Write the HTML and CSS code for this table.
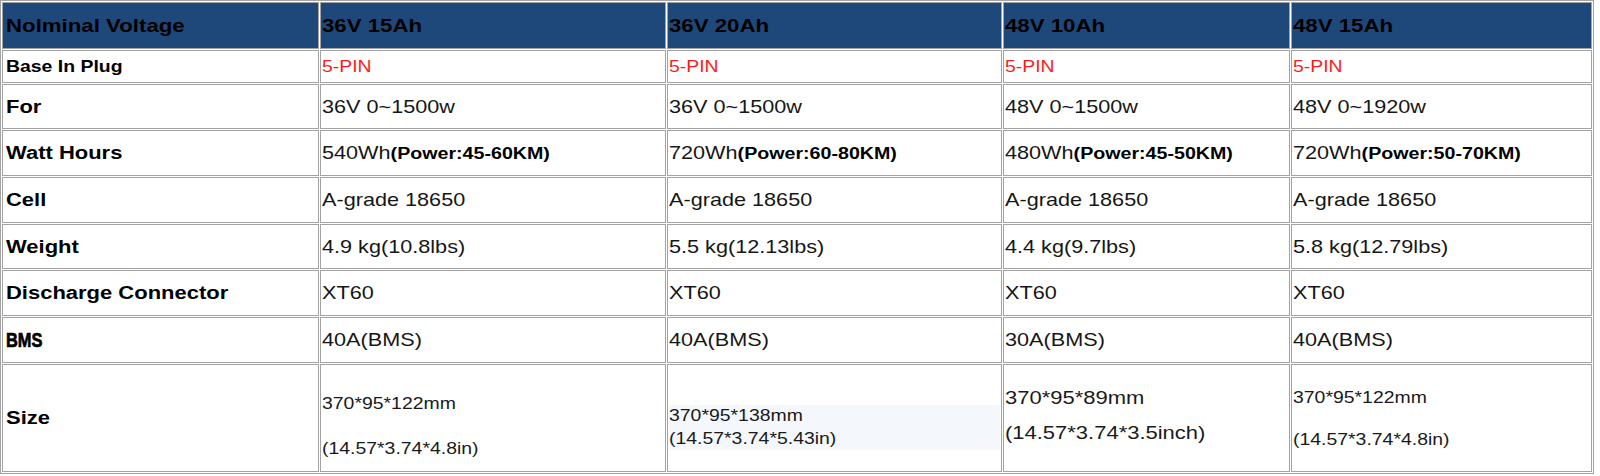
FILE: index.html
```html
<!DOCTYPE html>
<html>
<head>
<meta charset="utf-8">
<link rel="stylesheet" href="styles.css">
</head>
<body>
<table class="spec">
  <tr class="r-head">
    <td class="c1 lab"><span class="s">Nolminal Voltage</span></td>
    <td class="c2"><span class="s">36V 15Ah</span></td>
    <td class="c3"><span class="s">36V 20Ah</span></td>
    <td class="c4"><span class="s">48V 10Ah</span></td>
    <td class="c5"><span class="s">48V 15Ah</span></td>
  </tr>
  <tr class="r-plug">
    <th><span class="s">Base In Plug</span></th>
    <td class="red"><span class="s">5-PIN</span></td>
    <td class="red"><span class="s">5-PIN</span></td>
    <td class="red"><span class="s">5-PIN</span></td>
    <td class="red"><span class="s">5-PIN</span></td>
  </tr>
  <tr class="r-for">
    <th><span class="s">For</span></th>
    <td><span class="s">36V 0~1500w</span></td>
    <td><span class="s">36V 0~1500w</span></td>
    <td><span class="s">48V 0~1500w</span></td>
    <td><span class="s">48V 0~1920w</span></td>
  </tr>
  <tr class="r-std">
    <th><span class="s">Watt Hours</span></th>
    <td><span class="s">540Wh<b class="pw">(Power:45-60KM)</b></span></td>
    <td><span class="s">720Wh<b class="pw">(Power:60-80KM)</b></span></td>
    <td><span class="s">480Wh<b class="pw">(Power:45-50KM)</b></span></td>
    <td><span class="s">720Wh<b class="pw">(Power:50-70KM)</b></span></td>
  </tr>
  <tr class="r-std">
    <th><span class="s">Cell</span></th>
    <td><span class="s">A-grade 18650</span></td>
    <td><span class="s">A-grade 18650</span></td>
    <td><span class="s">A-grade 18650</span></td>
    <td><span class="s">A-grade 18650</span></td>
  </tr>
  <tr class="r-wt">
    <th><span class="s">Weight</span></th>
    <td><span class="s">4.9 kg(10.8lbs)</span></td>
    <td><span class="s">5.5 kg(12.13lbs)</span></td>
    <td><span class="s">4.4 kg(9.7lbs)</span></td>
    <td><span class="s">5.8 kg(12.79lbs)</span></td>
  </tr>
  <tr class="r-std">
    <th><span class="s">Discharge Connector</span></th>
    <td><span class="s">XT60</span></td>
    <td><span class="s">XT60</span></td>
    <td><span class="s">XT60</span></td>
    <td><span class="s">XT60</span></td>
  </tr>
  <tr class="r-std">
    <th><span class="bms">BMS</span></th>
    <td><span class="s">40A(BMS)</span></td>
    <td><span class="s">40A(BMS)</span></td>
    <td><span class="s">30A(BMS)</span></td>
    <td><span class="s">40A(BMS)</span></td>
  </tr>
  <tr class="r-size">
    <th><span class="s">Size</span></th>
    <td class="sz sz-a">
      <div class="l1"><span class="s">370*95*122mm</span></div>
      <div class="l2"><span class="s">(14.57*3.74*4.8in)</span></div>
    </td>
    <td class="sz sz-b">
      <div class="band">
        <div><span class="s">370*95*138mm</span></div>
        <div><span class="s">(14.57*3.74*5.43in)</span></div>
      </div>
    </td>
    <td class="sz sz-c">
      <div class="l1"><span class="s">370*95*89mm</span></div>
      <div class="l2"><span class="s">(14.57*3.74*3.5inch)</span></div>
    </td>
    <td class="sz sz-d">
      <div class="l1"><span class="s">370*95*122mm</span></div>
      <div class="l2"><span class="s">(14.57*3.74*4.8in)</span></div>
    </td>
  </tr>
</table>
</body>
</html>
```

FILE: styles.css
```css
html, body {
  margin: 0;
  padding: 0;
  background: #ffffff;
}

.spec {
  width: 1594px;
  table-layout: fixed;
  border-collapse: separate;
  border-spacing: 1px;
  border: 1px solid #a3a3a3;
  font-family: "Liberation Sans", Arial, sans-serif;
  font-size: 18.5px;
  color: #161616;
}

.spec td,
.spec th {
  box-sizing: border-box;
  border: 1px solid #a3a3a3;
  padding: 0 1px;
  text-align: left;
  vertical-align: middle;
  white-space: nowrap;
  overflow: visible;
}

.spec th,
.spec .lab {
  padding: 0 3px;
}

.spec th {
  font-weight: bold;
  font-size: 18.8px;
  color: #000000;
}

.c1 { width: 317px; }
.c2 { width: 346px; }
.c3 { width: 335px; }
.c4 { width: 287px; }
.c5 { width: 301px; }

.s {
  display: inline-block;
  transform: scaleX(1.17);
  transform-origin: 0 50%;
}

.r-head { height: 47px; }
.r-head td {
  background: #1f487a;
  color: #000000;
  font-weight: bold;
  font-size: 19px;
}

.r-plug { height: 33px; }
.spec .r-plug th { font-size: 16.6px; }
.r-plug td { font-size: 16.6px; }
.red { color: #ff1a1a; }

.r-for { height: 45px; }
.r-std { height: 46px; }
.r-wt { height: 45px; }

.pw {
  font-size: 16.8px;
  color: #000000;
}

.bms {
  display: inline-block;
  font-family: "Liberation Sans", Arial, sans-serif;
  font-weight: bold;
  font-size: 21px;
  -webkit-text-stroke: 0.7px #000000;
  transform: scaleX(0.78);
  transform-origin: 0 50%;
}

.r-size { height: 108px; }

.sz {
  vertical-align: top !important;
  font-size: 16.6px;
  color: #1a1a1a;
}

.sz-a .l1 { margin-top: 29px; line-height: 20px; }
.sz-a .l2 { margin-top: 25px; line-height: 20px; }

.sz-b .band {
  margin: 40px 0 0 0;
  background: #f4f7fb;
  line-height: 22.5px;
}

.sz-c { font-size: 18.8px; }
.sz-c .l1 { margin-top: 22px; line-height: 22px; }
.sz-c .l2 { margin-top: 13px; line-height: 22px; }

.sz-d .l1 { margin-top: 23px; line-height: 20px; }
.sz-d .l2 { margin-top: 22px; line-height: 20px; }
```
